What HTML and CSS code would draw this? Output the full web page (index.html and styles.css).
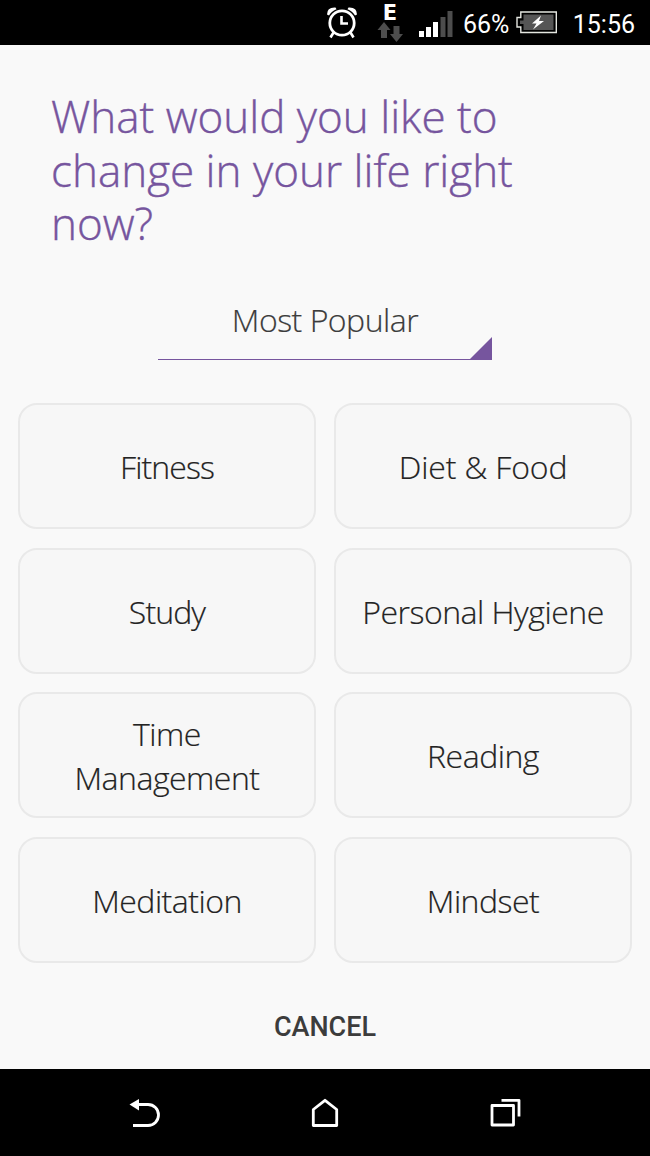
FILE: index.html
```html
<!DOCTYPE html>
<html lang="en">
<head>
    <meta charset="UTF-8">
    <meta name="viewport" content="width=device-width, initial-scale=1.0">
    <title>Choose a habit</title>
    <link rel="stylesheet" href="styles.css">
</head>
<body>
    <div class="screen">
        <!-- Status bar -->
        <header class="status-bar">
            <svg class="icon-alarm" width="32" height="34" viewBox="0 0 32 34" fill="none" stroke="#fff">
                <circle cx="16" cy="18" r="12.2" stroke-width="2.8"/>
                <path d="M15.500 11v7.500h6.500" stroke-width="2.600"/>
                <path d="M7.500 27.500L4.500 32.500M24.500 27.500l3 5" stroke-width="2.600"/>
                <path d="M1 9.500Q1 2 9.500 2.500L10.500 4.200Q5 6.500 3 10.500ZM31 9.500Q31 2 22.500 2.500L21.500 4.200Q27 6.500 29 10.500Z" fill="#fff" stroke="none"/>
            </svg>
            <div class="network">
                <span class="network-type">E</span>
                <svg width="26" height="20" viewBox="0 0 26 20" fill="#4d4d4d">
                    <path d="M7 0l6.500 8H10v8H4V8H0.500z"/>
                    <path d="M19.500 20l-6.500-8h3.500V4h6v8h3.500z"/>
                </svg>
            </div>
            <svg class="icon-signal" width="35" height="27" viewBox="0 0 35 27" fill="#fff">
                <rect x="0" y="20" width="5" height="6"/>
                <rect x="7" y="16" width="5" height="10"/>
                <rect x="14" y="11" width="5" height="15"/>
                <rect x="21.500" y="6" width="5" height="20" fill="#4d4d4d"/>
                <rect x="28.500" y="0" width="5" height="26" fill="#4d4d4d"/>
            </svg>
            <span class="battery-level">66%</span>
            <svg class="icon-battery" width="42" height="23" viewBox="0 0 42 23">
                <path d="M4.800 1h35.500v20.500H4.800V16H1V6.500h3.800z" fill="none" stroke="#e4e6e0" stroke-width="1.400"/>
                <path d="M7.500 3.500H37.500V19H7.500V13H4V9.500h3.500z" fill="#555"/>
                <path d="M25 4.500L16 12.500h4.500L17 18.500 28 10h-5z" fill="#fff"/>
            </svg>
            <span class="clock">15:56</span>
        </header>

        <!-- Habit picker -->
        <main class="content">
            <h1 class="title">What would you like to change in your life right now?</h1>

            <div class="category">
                <span class="category-name">Most Popular</span>
                <svg class="category-arrow" width="22" height="22" viewBox="0 0 22 22" fill="#76559e">
                    <path d="M22 0v22H0z"/>
                </svg>
            </div>

            <div class="habits">
                <button class="habit tight">Fitness</button>
                <button class="habit wide">Diet &amp; Food</button>
                <button class="habit tight">Study</button>
                <button class="habit">Personal Hygiene</button>
                <button class="habit">Time<br>Management</button>
                <button class="habit">Reading</button>
                <button class="habit">Meditation</button>
                <button class="habit">Mindset</button>
            </div>

            <button class="cancel">CANCEL</button>
        </main>

        <!-- System navigation -->
        <nav class="nav-bar">
            <svg width="32" height="30" viewBox="0 0 32 30" fill="none" stroke="#fff" stroke-width="2.800">
                <path d="M8 6.500H19A10.250 10.250 0 0 1 19 27.500H4"/>
                <path d="M0.500 6.500L10 1v11.500z" fill="#fff" stroke="none"/>
            </svg>
            <svg width="28" height="30" viewBox="0 0 28 30" fill="none" stroke="#fff" stroke-width="2.800" stroke-linejoin="round">
                <path d="M2.300 11.500L14 2.300l11.700 9.200V27.500H2.300z"/>
            </svg>
            <svg width="32" height="30" viewBox="0 0 32 30" fill="none" stroke="#fff" stroke-width="2.800" stroke-linejoin="round">
                <rect x="3" y="7.500" width="21.500" height="19.500"/>
                <path d="M12.500 2.300H30V18.500"/>
            </svg>
        </nav>
    </div>
</body>
</html>
```
FILE: styles.css
```css
* {
    margin: 0;
    padding: 0;
    box-sizing: border-box;
}

body {
    background: #f9f9f9;
    font-family: 'Open Sans', 'Noto Sans', sans-serif;
    overflow: hidden;
}

.screen {
    width: 650px;
    height: 1156px;
    display: flex;
    flex-direction: column;
}

/* Status bar */
.status-bar {
    height: 45px;
    background: #000;
    color: #fff;
    display: flex;
    align-items: flex-start;
    padding: 5px 15px 0 326px;
    font-family: Roboto, sans-serif;
    font-size: 25px;
    line-height: 39px;
}

.network {
    width: 26px;
    margin-left: 19px;
    display: flex;
    flex-direction: column;
    align-items: center;
}

.network-type {
    font-family: 'DejaVu Sans', sans-serif;
    font-size: 21px;
    font-weight: bold;
    line-height: 17px;
}

.icon-signal {
    margin: 6px 0 0 16px;
}

.battery-level {
    margin-left: 9px;
    width: 48px;
}

.icon-battery {
    margin: 6px 0 0 5px;
}

.clock {
    margin-left: auto;
}

/* Content */
.content {
    flex: 1;
    display: flex;
    flex-direction: column;
    align-items: center;
    padding: 45px 18px 0;
}

.title {
    align-self: stretch;
    padding: 0 80px 0 33px;
    color: #76559e;
    font-size: 44px;
    font-weight: 300;
    line-height: 53.500px;
    -webkit-text-stroke: 0.4px #76559e;
}

.category {
    width: 334px;
    height: 66px;
    margin-top: 43.500px;
    border-bottom: 1px solid #76559e;
    display: flex;
    flex-direction: column;
    color: #3c3c3c;
    font-size: 32px;
    font-weight: 300;
    line-height: 51px;
    letter-spacing: -0.5px;
    text-align: center;
    -webkit-text-stroke: 0.2px #3c3c3c;
}

.category-name {
    height: 43px;
}

.category-arrow {
    align-self: flex-end;
}

.habits {
    width: 614px;
    margin-top: 43.400px;
    display: grid;
    grid-template-columns: 1fr 1fr;
    grid-auto-rows: 126px;
    gap: 18.500px 18px;
}

.habit {
    padding-top: 1px;
    border: 2px solid #e9e9e9;
    border-radius: 19px;
    background: #f7f7f7;
    color: #232323;
    font-family: inherit;
    font-size: 32px;
    font-weight: 300;
    line-height: 43.500px;
    letter-spacing: -0.5px;
    -webkit-text-stroke: 0.2px #232323;
}

.habit.tight {
    letter-spacing: -0.9px;
}

.habit.wide {
    letter-spacing: -0.15px;
}

.cancel {
    margin-top: 44px;
    border: none;
    background: none;
    color: #3c3c3c;
    font-family: Roboto, sans-serif;
    font-size: 27px;
    font-weight: 500;
    line-height: 40px;
}

/* System navigation */
.nav-bar {
    height: 87px;
    background: #000;
    display: flex;
    justify-content: space-between;
    padding: 29px 129px 0;
}
```
